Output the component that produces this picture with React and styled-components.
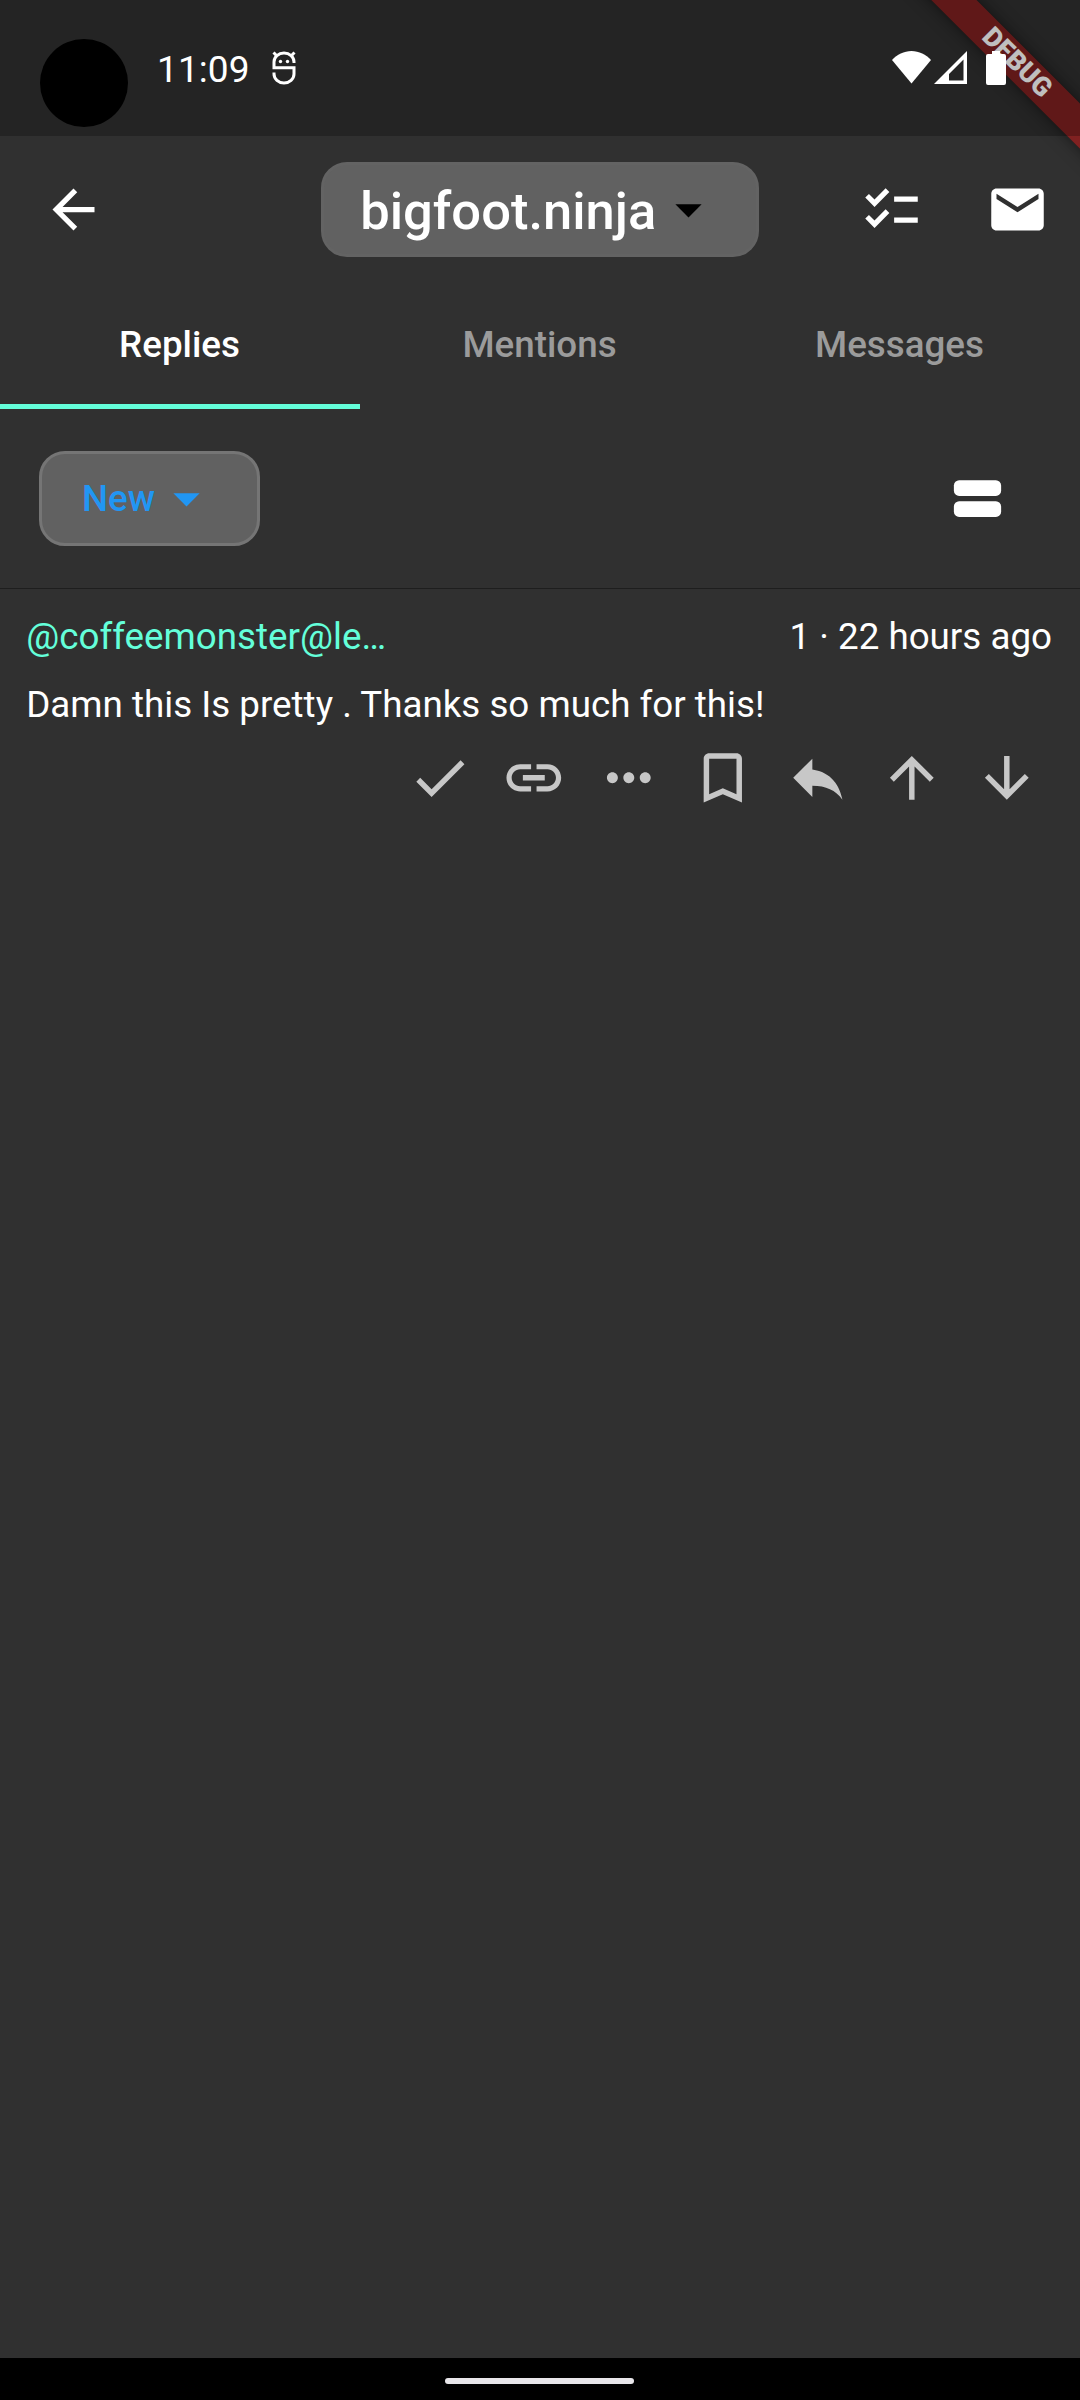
import React from 'react';
import styled, { createGlobalStyle } from 'styled-components';
import {
  MdArrowBack, MdChecklist, MdEmail, MdArrowDropDown, MdCheck, MdLink,
  MdMoreHoriz, MdBookmarkBorder, MdReply, MdArrowUpward, MdArrowDownward,
} from 'react-icons/md';

const Global = createGlobalStyle`
  *, *::before, *::after { box-sizing: border-box; }
  body { margin: 0; background: #303030; font-family: Roboto, sans-serif; }
`;

const Screen = styled.div`
  position: relative;
  display: flex;
  flex-direction: column;
  width: 1080px;
  height: 2400px;
  overflow: hidden;
  background: #303030;
  color: #fff;
  font-size: 36.75px;
  line-height: 43px;
  white-space: nowrap;
`;

const StatusBar = styled.header`
  position: relative;
  z-index: 2;
  display: flex;
  justify-content: space-between;
  align-items: flex-start;
  height: 136px;
  padding: 39px 74px 0 40px;
  background: rgba(0, 0, 0, 0.25);
`;

const StatusGroup = styled.div`
  display: flex;
  align-items: flex-start;
`;

const Camera = styled.div`
  width: 88px;
  height: 88px;
  border-radius: 50%;
  background: #000;
`;

const Clock = styled.time`
  margin: 9px 0 0 29px;
  width: 115px;
  font-size: 37px;
  letter-spacing: 0.1px;
`;

const StatusGlyph = styled.svg`
  display: block;
  width: ${(p) => p.$w}px;
  height: ${(p) => p.$h}px;
  margin: ${(p) => p.$top}px 0 0 ${(p) => p.$left || 0}px;
`;

const Ribbon = styled.div`
  position: absolute;
  z-index: 1;
  left: 817px;
  top: 46.75px;
  width: 400px;
  height: 31.5px;
  transform: rotate(45deg);
  background: rgba(176, 24, 24, 0.627);
  box-shadow: 0 0 16px rgba(0, 0, 0, 0.5);
  font-size: 26.8px;
  line-height: 31.5px;
  font-weight: 900;
  text-align: center;
`;

const AppBar = styled.nav`
  display: flex;
  justify-content: space-between;
  align-items: center;
  height: 147px;
`;

const BarSide = styled.div`
  display: flex;
  justify-content: flex-start;
  width: 252px;
`;

const IconButton = styled.button`
  display: flex;
  align-items: center;
  justify-content: center;
  width: ${(p) => p.$w || 126}px;
  height: ${(p) => p.$h || 126}px;
  padding: 0 0 0 ${(p) => p.$nudge || 0}px;
  border: 0;
  background: none;
  color: ${(p) => p.$color || '#fff'};
  font-size: ${(p) => p.$size || 63}px;
`;

const Picker = styled.button`
  display: flex;
  align-items: center;
  height: 94.5px;
  width: ${(p) => p.$w}px;
  padding: 0 0 0 ${(p) => p.$pad}px;
  border: 3px solid ${(p) => p.$border};
  border-radius: 26px;
  background: #616161;
  color: ${(p) => p.$color};
  font: 500 ${(p) => p.$font}px/1.17 Roboto, sans-serif;
`;

const PickerLabel = styled.span`
  width: ${(p) => p.$w}px;
  padding-top: ${(p) => p.$drop || 0}px;
  text-align: left;
`;

const PickerArrow = styled(MdArrowDropDown)`
  flex: none;
  width: 63px;
  height: 63px;
  color: ${(p) => p.color};
`;

const Tabs = styled.div`
  display: grid;
  grid-template-columns: repeat(3, 1fr);
  height: 126px;
`;

const Tab = styled.div`
  display: flex;
  align-items: center;
  justify-content: center;
  font-weight: 500;
  padding: 1px 1px 0 0;
  color: ${(p) => (p.$active ? '#fff' : '#9b9b9b')};
  border-bottom: 5px solid ${(p) => (p.$active ? '#64ffda' : 'transparent')};
`;

const FilterRow = styled.div`
  display: flex;
  align-items: center;
  justify-content: space-between;
  height: 180px;
  padding: 0 39.4px;
  border-bottom: 1px solid #1e1e1e;
`;

const Reply = styled.article`
  display: flex;
  flex-direction: column;
  flex: 1;
  padding: 26px 26.25px 0;
`;

const ReplyHead = styled.div`
  display: flex;
  justify-content: space-between;
  padding-right: 1.75px;
`;

const Author = styled.a`
  color: #64ffda;
`;

const ReplyText = styled.p`
  margin: 25px 0 0;
`;

const Actions = styled.div`
  display: flex;
  justify-content: flex-end;
  margin-top: 4.5px;
`;

const NavBar = styled.footer`
  display: flex;
  justify-content: center;
  align-items: flex-start;
  height: 42px;
  padding: 20px 1px 0 0;
  background: #000;
`;

const HomeHandle = styled.div`
  width: 189px;
  height: 6px;
  border-radius: 3px;
  background: #e8e6ea;
`;

const actions = [MdCheck, MdLink, MdMoreHoriz, MdBookmarkBorder, MdReply, MdArrowUpward, MdArrowDownward];

export default function App() {
  return (
    <Screen>
      <Global />
      <StatusBar>
        <StatusGroup>
          <Camera />
          <Clock>11:09</Clock>
          <StatusGlyph $w={24} $h={34} $top={12} viewBox="0 0 24 34" fill="none" stroke="#fff" strokeWidth="3">
            <path d="M22 12V11A10 9 0 0 0 2 11V16.8H22V23A10 9 0 0 1 2 23V21.500" />
            <path d="M1.500 1.500L5 5M22.500 1.500L19 5" />
            <circle cx="8.500" cy="10.500" r="1.700" fill="#fff" stroke="none" />
            <circle cx="15.500" cy="10.500" r="1.700" fill="#fff" stroke="none" />
          </StatusGlyph>
        </StatusGroup>
        <StatusGroup>
          <StatusGlyph $w={39} $h={33} $top={12} viewBox="0 0 39 33" fill="#fff">
            <path d="M19.5 32.5L0 9C5 3.500 12 0 19.500 0S34 3.500 39 9Z" />
          </StatusGlyph>
          <StatusGlyph $w={33} $h={33} $top={12} $left={3} viewBox="0 0 33 33" fill="#fff">
            <path fillRule="evenodd" d="M0 33L33 0V33ZM15 29.500H29.500V8.500L15 23Z" />
          </StatusGlyph>
          <StatusGlyph $w={20} $h={34} $top={12} $left={19} viewBox="0 0 20 34" fill="#fff">
            <path d="M6 0H14V3H18A2 2 0 0 1 20 5V32A2 2 0 0 1 18 34H2A2 2 0 0 1 0 32V5A2 2 0 0 1 2 3H6Z" />
          </StatusGlyph>
        </StatusGroup>
      </StatusBar>
      <Ribbon>DEBUG</Ribbon>
      <AppBar>
        <BarSide>
          <IconButton $w={147}><MdArrowBack /></IconButton>
        </BarSide>
        <Picker $w={438.4} $pad={36.4} $border="#636363" $color="#fff" $font={52.5}>
          <PickerLabel $w={297.2} $drop={3.5}>bigfoot.ninja</PickerLabel>
          <PickerArrow color="#000" />
        </Picker>
        <BarSide>
          <IconButton $nudge={1}><MdChecklist /></IconButton>
          <IconButton $nudge={1}><MdEmail /></IconButton>
        </BarSide>
      </AppBar>
      <Tabs>
        <Tab $active>Replies</Tab>
        <Tab>Mentions</Tab>
        <Tab>Messages</Tab>
      </Tabs>
      <FilterRow>
        <Picker $w={221} $pad={39.6} $border="#757575" $color="#2196f3" $font={36.75}>
          <PickerLabel $w={73.5}>New</PickerLabel>
          <PickerArrow color="#2196f3" />
        </Picker>
        <IconButton>
          <svg width="63" height="63" viewBox="0 0 24 24" fill="#fff">
            <rect x="3" y="5" width="18" height="6" rx="2" />
            <rect x="3" y="13" width="18" height="6" rx="2" />
          </svg>
        </IconButton>
      </FilterRow>
      <Reply>
        <ReplyHead>
          <Author>@coffeemonster@le…</Author>
          <span>1 · 22 hours ago</span>
        </ReplyHead>
        <ReplyText>Damn this Is pretty . Thanks so much for this!</ReplyText>
        <Actions>
          {actions.map((Icon, i) => (
            <IconButton key={i} $w={94.5} $h={94.5} $size={65.625} $color="#c7c7c7"><Icon /></IconButton>
          ))}
        </Actions>
      </Reply>
      <NavBar><HomeHandle /></NavBar>
    </Screen>
  );
}
